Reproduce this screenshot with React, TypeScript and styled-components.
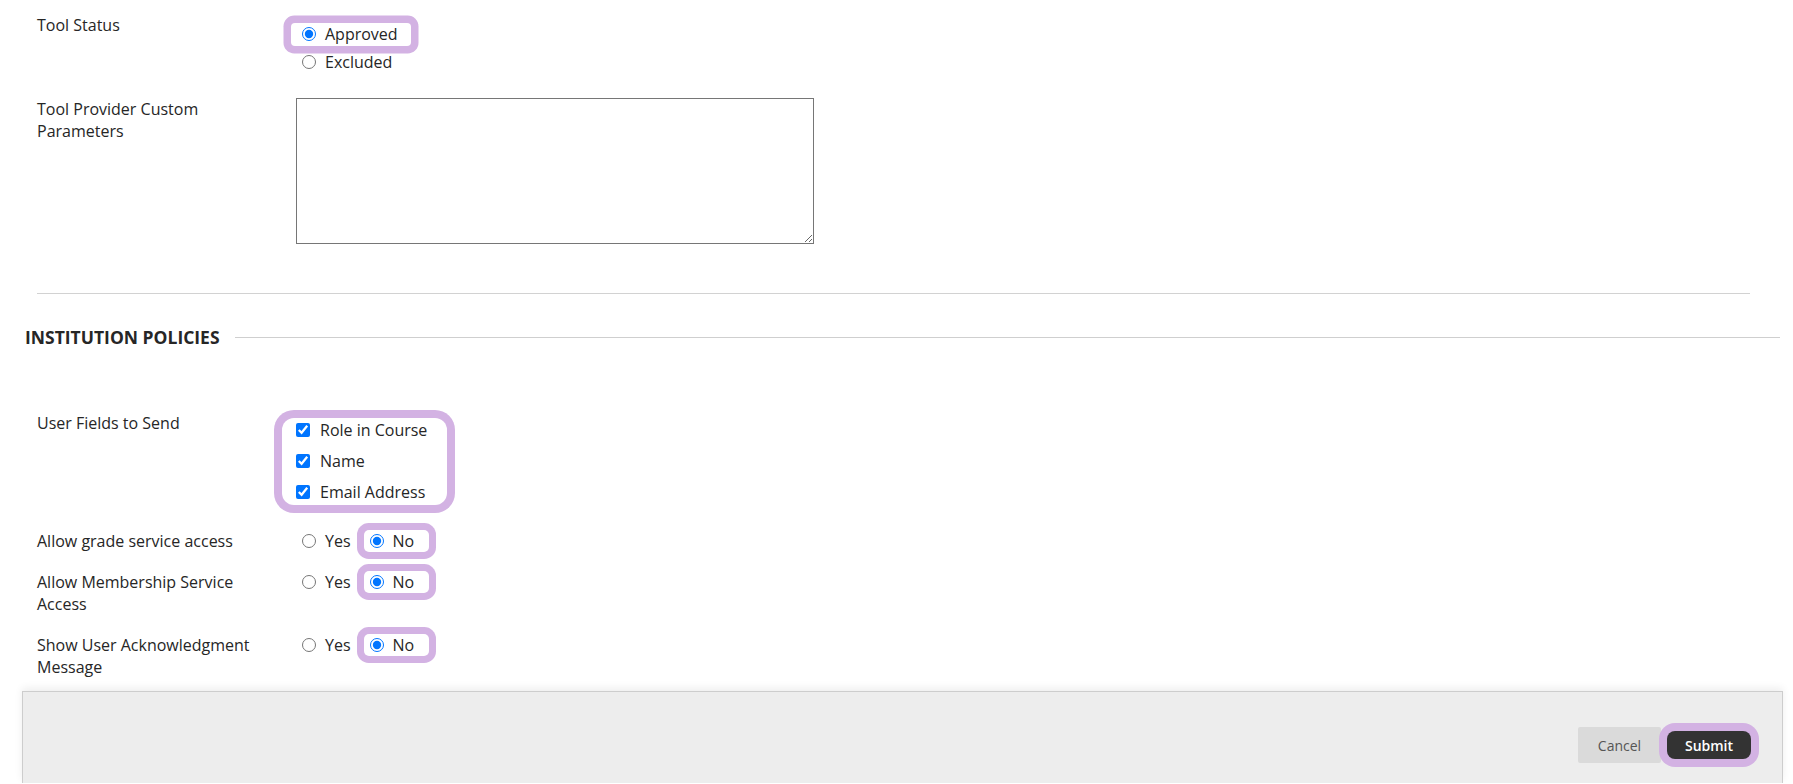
import React from 'react';
import styled, { createGlobalStyle } from 'styled-components';

const GlobalStyle = createGlobalStyle`
  body {
    margin: 0;
    background: #fff;
    color: #262626;
    font-family: 'Open Sans', 'Liberation Sans', sans-serif;
    overflow: hidden;
  }
`;

const Page = styled.div`
  display: flex;
  flex-direction: column;
  padding-top: 14px;
`;

const Section = styled.section`
  display: flex;
  flex-direction: column;
  padding: 0 43px 0 37px;
`;

const FieldRow = styled.div<{ $gap: number }>`
  display: grid;
  grid-template-columns: 259px 1fr;
  margin-top: ${(p) => p.$gap}px;
`;

const Label = styled.div`
  width: 232px;
  font-size: 16px;
  line-height: 22px;
`;

const Control = styled.div<{ $top?: number }>`
  display: flex;
  align-items: flex-start;
  padding-top: ${(p) => p.$top || 0}px;
`;

const OptionStack = styled.div<{ $gap: number }>`
  display: flex;
  flex-direction: column;
  align-items: flex-start;
  gap: ${(p) => p.$gap}px;
`;

const OptionRow = styled.div`
  display: flex;
  align-items: center;
  gap: 13px;
`;

const Option = styled.label`
  display: flex;
  align-items: center;
  gap: 9px;
  height: 22px;
  font-size: 16px;
  line-height: 22px;
  white-space: nowrap;
`;

const Radio = styled.input.attrs({ type: 'radio' })`
  width: 14px;
  height: 14px;
  margin: 0 0 0 6px;
  accent-color: #0075ff;
`;

const Check = styled.input.attrs({ type: 'checkbox' })`
  width: 14px;
  height: 14px;
  margin: 0 1px 0 0;
  accent-color: #0075ff;
`;

// purple ring drawn around what the screenshot marks, without moving the layout
const Highlight = styled.div<{ $pad: [number, number, number, number]; $radius: number; $ring: number; $gap?: number }>`
  display: flex;
  flex-direction: column;
  gap: ${(p) => p.$gap || 0}px;
  background: #fff;
  padding: ${(p) => p.$pad.map((v) => `${v}px`).join(' ')};
  margin: ${(p) => p.$pad.map((v) => `${-v}px`).join(' ')};
  border-radius: ${(p) => p.$radius}px;
  box-shadow: 0 0 0 ${(p) => p.$ring}px #d3b2e3;
`;

const TextArea = styled.textarea`
  box-sizing: border-box;
  width: 518px;
  height: 146px;
  border: 1px solid #767676;
  border-radius: 0;
  font-family: inherit;
`;

const Divider = styled.hr`
  margin: 49px 0 0;
  border: none;
  height: 1px;
  background: #d2d2d2;
`;

const HeadingRow = styled.div`
  display: flex;
  align-items: center;
  height: 24px;
  margin-top: 31px;
  padding: 0 13px 0 25px;
`;

const Heading = styled.h2`
  margin: 0;
  font-size: 17.5px;
  line-height: 24px;
  font-weight: 700;
  text-transform: uppercase;
  color: #262626;
`;

const HeadingLine = styled.div`
  flex: 1;
  height: 1px;
  margin-left: 15px;
  background: #cfcfcf;
`;

const Footer = styled.footer`
  box-sizing: border-box;
  height: 92px;
  margin: 13px 10px 0 22px;
  padding: 35px 31px 0 0;
  display: flex;
  justify-content: flex-end;
  align-items: flex-start;
  background: #ededed;
  border: 1px solid #cdcdcd;
  border-bottom: none;
  box-shadow: 0 -3px 8px rgba(0, 0, 0, 0.07);
`;

const Buttons = styled.div`
  display: flex;
  align-items: center;
  gap: 6px;
`;

const CancelButton = styled.button`
  width: 83px;
  height: 36px;
  border: none;
  border-radius: 2px;
  background: #dadada;
  color: #555;
  font-family: inherit;
  font-size: 14px;
`;

const SubmitButton = styled.button`
  width: 84px;
  height: 28px;
  border: none;
  border-radius: 8px;
  background: #333;
  color: #fff;
  font-family: inherit;
  font-size: 14px;
  font-weight: 600;
  box-shadow: 0 0 0 8px #d3b2e3;
`;

const YesNo = ({ name }: { name: string }) => (
  <OptionRow>
    <Option>
      <Radio name={name} />
      Yes
    </Option>
    <Highlight $pad={[0, 15, 0, 0]} $radius={5} $ring={7}>
      <Option>
        <Radio name={name} defaultChecked />
        No
      </Option>
    </Highlight>
  </OptionRow>
);

const App: React.FC = () => {
  return (
    <Page>
      <GlobalStyle />
      <Section>
        <FieldRow $gap={0}>
          <Label>Tool Status</Label>
          <Control $top={9}>
            <OptionStack $gap={6}>
              <Highlight $pad={[0, 13, 1, 5]} $radius={4} $ring={7.5}>
                <Option>
                  <Radio name="status" defaultChecked />
                  Approved
                </Option>
              </Highlight>
              <Option>
                <Radio name="status" />
                Excluded
              </Option>
            </OptionStack>
          </Control>
        </FieldRow>
        <FieldRow $gap={25}>
          <Label>Tool Provider Custom Parameters</Label>
          <Control>
            <TextArea />
          </Control>
        </FieldRow>
        <Divider />
      </Section>

      <HeadingRow>
        <Heading>Institution Policies</Heading>
        <HeadingLine />
      </HeadingRow>

      <Section>
        <FieldRow $gap={63}>
          <Label>User Fields to Send</Label>
          <Control $top={7}>
            <Highlight $pad={[1, 20, 2, 14]} $radius={12} $ring={8} $gap={9}>
              <Option>
                <Check defaultChecked />
                Role in Course
              </Option>
              <Option>
                <Check defaultChecked />
                Name
              </Option>
              <Option>
                <Check defaultChecked />
                Email Address
              </Option>
            </Highlight>
          </Control>
        </FieldRow>
        <FieldRow $gap={26.5}>
          <Label>Allow grade service access</Label>
          <Control>
            <YesNo name="grade" />
          </Control>
        </FieldRow>
        <FieldRow $gap={19.5}>
          <Label>Allow Membership Service Access</Label>
          <Control>
            <YesNo name="membership" />
          </Control>
        </FieldRow>
        <FieldRow $gap={19}>
          <Label>Show User Acknowledgment Message</Label>
          <Control>
            <YesNo name="ack" />
          </Control>
        </FieldRow>
      </Section>

      <Footer>
        <Buttons>
          <CancelButton>Cancel</CancelButton>
          <SubmitButton>Submit</SubmitButton>
        </Buttons>
      </Footer>
    </Page>
  );
};

export default App;
